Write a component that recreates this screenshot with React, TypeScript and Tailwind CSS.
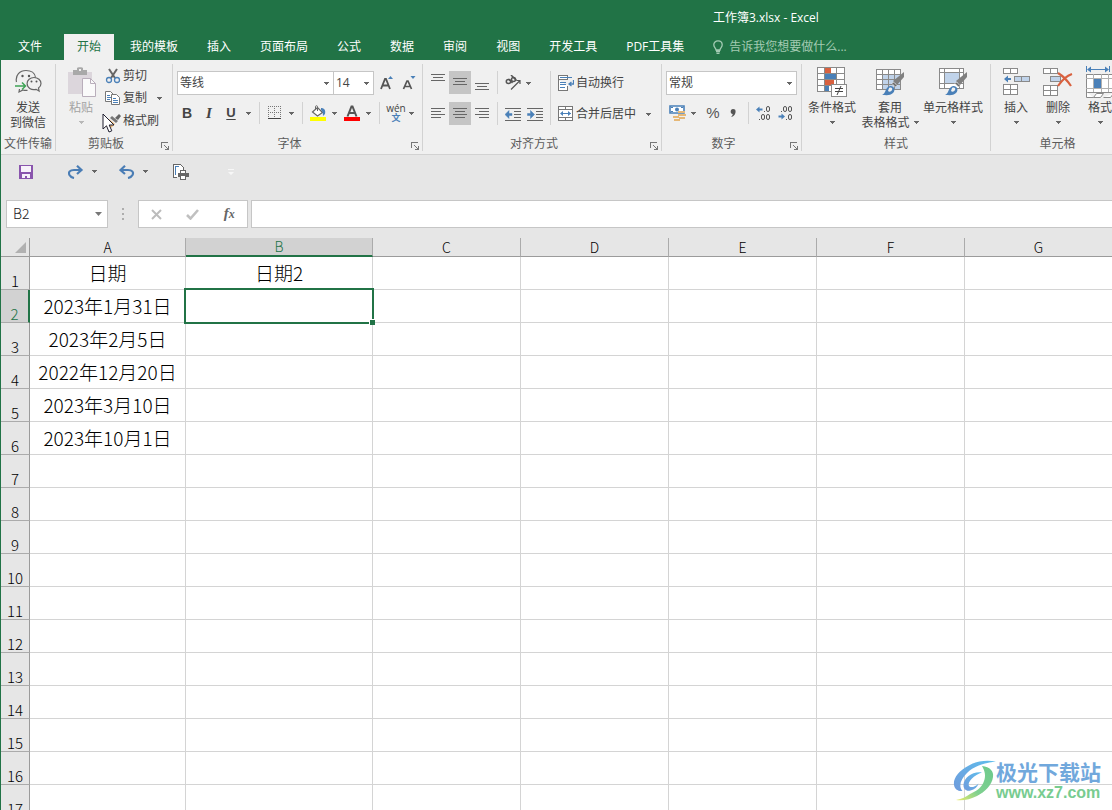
import type { ReactNode } from "react";

const tabs = [
  "我的模板",
  "插入",
  "页面布局",
  "公式",
  "数据",
  "审阅",
  "视图",
  "开发工具",
  "PDF工具集",
];

const columns = ["A", "B", "C", "D", "E", "F", "G"];

const cells: Record<string, string> = {
  A1: "日期",
  B1: "日期2",
  A2: "2023年1月31日",
  A3: "2023年2月5日",
  A4: "2022年12月20日",
  A5: "2023年3月10日",
  A6: "2023年10月1日",
};

const rows = Array.from({ length: 17 }, (_, i) => i + 1);

function Arrow({ className = "text-[#666666]" }: { className?: string }) {
  return (
    <svg viewBox="0 0 5 3" className={`h-[3px] w-[5px] shrink-0 ${className}`} fill="currentColor" shapeRendering="crispEdges" aria-hidden="true">
      <path d="M0 0h5v1h-1v1h-1v1h-1v-1h-1v-1h-1z" />
    </svg>
  );
}

function DropButton({ label, className = "" }: { label: string; className?: string }) {
  return (
    <button type="button" aria-label={label} className={`flex h-6 w-3 shrink-0 items-center justify-center ${className}`}>
      <Arrow />
    </button>
  );
}

function IconButton({ label, className = "", children }: { label: string; className?: string; children: ReactNode }) {
  return (
    <button type="button" aria-label={label} className={`flex h-6 shrink-0 items-center justify-center ${className}`}>
      {children}
    </button>
  );
}

function Separator({ className = "h-[22px]" }: { className?: string }) {
  return <div className={`w-px shrink-0 bg-[#d2d2d2] ${className}`} />;
}

function Group({
  label,
  launcher = false,
  className,
  children,
}: {
  label: string;
  launcher?: boolean;
  className: string;
  children: ReactNode;
}) {
  return (
    <section aria-label={label} className={`relative flex h-[87px] shrink-0 flex-col border-r border-[#d2d2d2] ${className}`}>
      <div className="h-[73px]">{children}</div>
      <p className={`text-center leading-[14px] text-[#5c5c5c] ${launcher ? "pr-4" : ""}`}>{label}</p>
      {launcher && (
        <button type="button" aria-label={`${label}设置`} className="absolute right-[3px] bottom-px">
          <svg viewBox="0 0 8 8" className="size-2" fill="none" stroke="#777777" shapeRendering="crispEdges">
            <path d="M.5 6V.5H7M3 3l4 4M7.500 4v3.500H4" />
            <path d="M5 7h3M7 5v3" />
          </svg>
        </button>
      )}
    </section>
  );
}

function SelectBox({ label, value, className }: { label: string; value: string; className: string }) {
  return (
    <div className={`grid h-6 shrink-0 items-center border border-[#c6c6c6] bg-white ${className}`}>
      <select aria-label={label} defaultValue={value} className="col-start-1 row-start-1 h-full w-full appearance-none pl-0.5 text-[12px] text-[#444444] outline-none">
        <option>{value}</option>
      </select>
      <span className="pointer-events-none col-start-1 row-start-1 mr-1 flex justify-self-end">
        <Arrow />
      </span>
    </div>
  );
}

function AlignButton({ label, d, active = false }: { label: string; d: string; active?: boolean }) {
  return (
    <button
      type="button"
      aria-label={label}
      aria-pressed={active}
      className={`flex h-[23px] w-[22px] items-center justify-center ${active ? "bg-[#c5c5c5]" : ""}`}
    >
      <svg viewBox="0 0 14 23" className="h-[23px] w-3.5" stroke="#666666" shapeRendering="crispEdges">
        <path d={d} />
      </svg>
    </button>
  );
}

function BigButton({
  lines,
  icon,
  className,
  inlineArrow = false,
  arrow = true,
  muted = false,
}: {
  lines: string[];
  icon: ReactNode;
  className: string;
  inlineArrow?: boolean;
  arrow?: boolean;
  muted?: boolean;
}) {
  return (
    <button
      type="button"
      className={`flex shrink-0 flex-col items-center leading-[15px] whitespace-nowrap ${muted ? "text-[#a3a3a3]" : "text-[#444444]"} ${className}`}
    >
      <span className="flex h-9 items-center">{icon}</span>
      <span>{lines[0]}</span>
      <span className="flex h-[15px] items-center gap-1">
        {lines[1]}
        {arrow && <Arrow className={muted ? "text-[#b8b8b8]" : "text-[#666666]"} />}
        {inlineArrow && <Arrow />}
      </span>
    </button>
  );
}

function Brush() {
  return (
    <>
      <path d="M29 5v5l-7 8-4-4z" fill="#808080" />
      <path d="M18.500 15l3.500 3.500-1.500 1.500-3.500-3.500z" fill="#6a6a6a" stroke="#f0f0f0" strokeWidth=".6" />
      <path d="M7 28c4-1 3-8 8-9 4-.5 6 4 3 7-3 3-7 2-11 2z" fill="#4a80b8" />
      <path d="M14 21c2-1 4 0 3 2s-3 2-4 1z" fill="#f0f0f0" />
    </>
  );
}

function WeChatIcon() {
  return (
    <svg viewBox="0 0 27 26" className="h-[26px] w-[27px]" fill="none" stroke="#666666" strokeWidth="1.200">
      <path d="M1.500 13C0 6 5 1.500 11 1.500c5 0 9 2.500 9.500 7" />
      <path d="M4.500 20l-.5 3 4-2c1.500.5 3 .6 4.500.3" />
      <path d="M19 8.500c4 0 7 2.700 7 6 0 2-1 3.500-2.500 4.600l.6 2.900-3-1.700c-5 1-9-1.500-9-5.800 0-3.300 3-6 6.900-6z" />
      <path d="M0 17h10.500M7 13.500l3.500 3.500L7 20.500" stroke="#3ea356" strokeWidth="1.500" />
      <g fill="#555555" stroke="none">
        <circle cx="7.500" cy="7" r="1.200" />
        <circle cx="14" cy="7" r="1.200" />
        <circle cx="16.500" cy="12.500" r="1" />
        <circle cx="21.500" cy="12.500" r="1" />
      </g>
    </svg>
  );
}

function PasteIcon() {
  return (
    <svg viewBox="0 0 29 30" className="h-[30px] w-[29px]">
      <path d="M1 5h24v22H1z" fill="#dcd6dc" />
      <path d="M6 3h4V1c0-1 6-1 6 0v2h4v5H6z" fill="#a9a9a9" />
      <path d="M12 2h2v2h-2z" fill="#f0f0f0" />
      <path d="M15.500 11.500h8l5 5v13h-13z" fill="#fafafa" stroke="#b9aebb" />
      <path d="M23.500 11.500v5h5" fill="none" stroke="#b9aebb" />
    </svg>
  );
}

function Ribbon() {
  return (
    <div className="flex h-[95px] overflow-hidden border-b border-[#d2d2d2] bg-[#f0f0f0] pt-1 text-[12px]">
      <Group label="文件传输" className="w-[55px]">
        <BigButton className="w-full" arrow={false} lines={["发送", "到微信"]} icon={<WeChatIcon />} />
      </Group>

      <Group label="剪贴板" launcher className="w-[117px]">
        <div className="flex">
          <BigButton className="ml-[7px] w-9" muted lines={["粘贴"]} icon={<PasteIcon />} />
          <div className="ml-1.5 flex flex-1 flex-col text-[#444444]">
            <button type="button" className="flex h-[23px] items-center gap-0.5">
              <svg viewBox="0 0 16 16" className="size-4" fill="none">
                <path d="M4 1l6 9M12 1L6 10" stroke="#666666" strokeWidth="2" />
                <circle cx="4" cy="12" r="2.500" stroke="#4a80b8" strokeWidth="1.300" />
                <circle cx="12" cy="12" r="2.500" stroke="#4a80b8" strokeWidth="1.300" />
              </svg>
              剪切
            </button>
            <div className="flex h-[22px] items-center">
              <button type="button" className="flex items-center gap-0.5">
                <svg viewBox="0 0 16 16" className="size-4" fill="#ffffff" stroke="#777777">
                  <path d="M.5 1.500h5l3 3v7h-8z" />
                  <path d="M2 5.500h3M2 7.500h4M2 9.500h3" stroke="#4a80b8" />
                  <path d="M6.500 4.500h5l3 3v7h-8z" />
                  <path d="M8 8.500h3M8 10.500h5M8 12.500h5" stroke="#4a80b8" />
                </svg>
                复制
              </button>
              <DropButton label="复制选项" className="ml-1.5" />
            </div>
            <button type="button" className="flex h-6 items-center gap-0.5">
              <svg viewBox="0 0 16 16" className="size-4">
                <path d="M14 1l2 2-3 4-3-2z" fill="#666666" />
                <path d="M7 3l6 5-2 2-6-5z" fill="#777777" />
                <path d="M4 6l6 5-4 4c-2 0-5-1-6-3z" fill="#eab676" />
              </svg>
              格式刷
            </button>
          </div>
        </div>
        {/* mouse pointer resting over the clipboard group */}
        <svg viewBox="0 0 13 20" className="pointer-events-none absolute top-[49px] left-[46px] h-5 w-[13px]" aria-hidden="true">
          <path d="M1 1v15l3.500-3.200L7 19l2.800-1.200-2.600-5.800H12z" fill="#ffffff" stroke="#1f1f2f" />
        </svg>
      </Group>

      <Group label="字体" launcher className="w-[250px]">
        <div className="flex items-center pt-[7px] pl-1">
          <SelectBox label="字体" value="等线" className="w-[157px]" />
          <SelectBox label="字号" value="14" className="-ml-px w-[41px]" />
          <IconButton label="增大字号" className="ml-1.5 w-[14px]">
            <svg viewBox="0 0 14 16" className="h-4 w-3.5">
              <path d="M1 14L5 4h1l4 10M2.500 10.500h6" fill="none" stroke="#555555" strokeWidth="1.800" />
              <path d="M8 4l2.500-3L13 4z" fill="#4a80b8" />
            </svg>
          </IconButton>
          <IconButton label="减小字号" className="ml-2 w-[14px]">
            <svg viewBox="0 0 14 16" className="h-4 w-3.5">
              <path d="M1.500 14L5 6h1l3.500 8M3 11.500h5" fill="none" stroke="#555555" strokeWidth="1.700" />
              <path d="M8.500 1h5L11 4z" fill="#4a80b8" />
            </svg>
          </IconButton>
        </div>
        <div className="flex items-center pt-[6px] pl-1 text-[#444444]">
          <IconButton label="加粗" className="w-5 font-['Liberation_Sans',sans-serif] text-[14px] font-bold">B</IconButton>
          <IconButton label="倾斜" className="ml-0.5 w-5 font-['Liberation_Serif',serif] text-[15px] font-bold italic">I</IconButton>
          <IconButton label="下划线" className="ml-0.5 w-5 font-['Liberation_Sans',sans-serif] text-[13px] font-bold underline underline-offset-2">U</IconButton>
          <DropButton label="下划线选项" className="ml-px" />
          <Separator className="ml-[5px] h-[22px]" />
          <IconButton label="边框" className="ml-1.5 w-[18px]">
            <svg viewBox="0 0 14 14" className="size-3.5" fill="none" stroke="#777777" shapeRendering="crispEdges">
              <path d="M0 .5h14M0 6.500h14M.5 0v13M6.500 0v13M12.500 0v13" strokeDasharray="1 1" />
              <path d="M0 12.500h13" stroke="#444444" />
            </svg>
          </IconButton>
          <DropButton label="边框选项" className="ml-px" />
          <Separator className="ml-[5px] h-[22px]" />
          <IconButton label="填充颜色" className="ml-1.5 w-[18px]">
            <svg viewBox="0 0 16 16" className="size-4">
              <path d="M2.500 7l5-4.500 5 5-5 3.500z" fill="#ffffff" stroke="#666666" strokeWidth="1.200" />
              <path d="M5.500 5V1.500c0-1 2-1 2 0V6" fill="none" stroke="#666666" />
              <path d="M11 3c3 0 5 2 4 6l-2 2c0-3-.5-5-2-6z" fill="#4a80b8" />
              <path d="M0 12h16v4H0z" fill="#ffff00" />
            </svg>
          </IconButton>
          <DropButton label="填充颜色选项" className="ml-px" />
          <IconButton label="字体颜色" className="ml-1 w-4">
            <svg viewBox="0 0 16 16" className="size-4">
              <path d="M3.500 11.500L7.500 1.500h1l4 10M5 8h6" fill="none" stroke="#555555" strokeWidth="2" />
              <path d="M0 12h16v4H0z" fill="#ff0000" />
            </svg>
          </IconButton>
          <DropButton label="字体颜色选项" className="ml-0.5" />
          <Separator className="ml-[5px] h-[22px]" />
          <IconButton label="拼音指南" className="ml-2 w-4 flex-col text-[10px] leading-[9px]">
            <span>wén</span>
            <span className="text-[9px] font-bold text-[#4a80b8]">文</span>
          </IconButton>
          <DropButton label="拼音选项" className="ml-px" />
        </div>
      </Group>

      <Group label="对齐方式" launcher className="w-[239px]">
        <div className="flex pt-[7px] pl-1">
          <div className="flex flex-col gap-2">
            <div className="flex">
              <AlignButton label="顶端对齐" d="M0 3.500h14M2 6.500h10M0 9.500h14" />
              <AlignButton label="垂直居中" active d="M0 7.500h14M2 10.500h10M0 13.500h14" />
              <AlignButton label="底端对齐" d="M0 12.500h14M2 15.500h10M0 18.500h14" />
            </div>
            <div className="flex">
              <AlignButton label="左对齐" d="M0 6.500h14M0 9.500h10M0 12.500h14M0 15.500h10" />
              <AlignButton label="居中" active d="M0 6.500h14M2 9.500h10M0 12.500h14M2 15.500h10" />
              <AlignButton label="右对齐" d="M0 6.500h14M4 9.500h10M0 12.500h14M4 15.500h10" />
            </div>
          </div>
          <div className="ml-1 flex flex-col gap-2">
            <Separator className="h-[23px]" />
            <Separator className="h-[23px]" />
          </div>
          <div className="ml-1.5 flex w-[46px] flex-col gap-[7px]">
            <div className="flex items-center">
              <IconButton label="方向" className="w-[18px]">
                <svg viewBox="0 0 16 16" className="size-4" fill="none" stroke="#555555" strokeWidth="1.500">
                  <ellipse cx="3.500" cy="6.500" rx="2.200" ry="2" />
                  <path d="M3.500 4l4 4M6 0l5.500 5.500" />
                  <circle cx="8.500" cy="4.500" r="2" />
                  <path d="M6 14.500L15 5.500M11.500 5.500H15V9" strokeWidth="1.200" />
                </svg>
              </IconButton>
              <DropButton label="方向选项" />
            </div>
            <div className="flex items-center gap-1">
              <IconButton label="减少缩进量" className="w-[18px]">
                <svg viewBox="0 0 16 13" className="h-[13px] w-4" stroke="#666666" shapeRendering="crispEdges">
                  <path d="M0 .5h16M9 3.500h7M9 6.500h7M9 9.500h7M0 12.500h16" />
                  <path d="M0 6.500l4-4v3h3v2H4v3z" fill="#4a80b8" stroke="#4a80b8" strokeWidth=".5" shapeRendering="auto" />
                </svg>
              </IconButton>
              <IconButton label="增加缩进量" className="w-[18px]">
                <svg viewBox="0 0 16 13" className="h-[13px] w-4" stroke="#666666" shapeRendering="crispEdges">
                  <path d="M0 .5h16M9 3.500h7M9 6.500h7M9 9.500h7M0 12.500h16" />
                  <path d="M7.500 6.500l-4-4v3h-3v2h3v3z" fill="#4a80b8" stroke="#4a80b8" strokeWidth=".5" shapeRendering="auto" />
                </svg>
              </IconButton>
            </div>
          </div>
          <Separator className="h-[54px]" />
          <div className="ml-[7px] flex flex-col gap-[7px] text-[#444444]">
            <button type="button" className="flex h-6 items-center gap-0.5">
              <svg viewBox="0 0 16 16" className="size-4" fill="none" stroke="#777777" shapeRendering="crispEdges">
                <path d="M.5 .5h9v4h-9zM.5 5v10h9V11" fill="#ffffff" />
                <path d="M2 2.500h12M2 7.500h6M2 9.500h6M2 12.500h5" stroke="#4a80b8" />
                <path d="M15.500 5v4h-4M13.500 7l-2.500 2 2.500 2" stroke="#4a80b8" strokeWidth="1.300" shapeRendering="auto" />
              </svg>
              自动换行
            </button>
            <div className="flex items-center">
              <button type="button" className="flex h-6 items-center gap-0.5">
                <svg viewBox="0 0 16 16" className="size-4" fill="#ffffff" stroke="#777777" shapeRendering="crispEdges">
                  <path d="M.5 .5h14v14H.5zM.5 3.500h14M.5 11.500h14M7.500 .5v3M7.500 11.500v3" />
                  <path d="M3 7.500h10" stroke="#4a80b8" />
                  <path d="M2 7.500L5 5v5zM13 7.500L10 5v5z" fill="#4a80b8" stroke="none" shapeRendering="auto" />
                </svg>
                合并后居中
              </button>
              <DropButton label="合并选项" className="ml-1.5" />
            </div>
          </div>
        </div>
      </Group>

      <Group label="数字" launcher className="w-[140px]">
        <div className="pt-[7px] pl-1">
          <SelectBox label="数字格式" value="常规" className="w-[131px]" />
        </div>
        <div className="flex items-center pt-[6px] pl-1.5 text-[#555555]">
          <IconButton label="会计数字格式" className="w-[18px]">
            <svg viewBox="0 0 17 16" className="h-4 w-[17px]">
              <path d="M1 1h14v7H1z" fill="#ffffff" stroke="#4a80b8" strokeWidth="1.600" />
              <circle cx="8" cy="4.500" r="2" fill="#4a80b8" />
              <path d="M2 2h2v1H2zM12 2h2v1h-2zM2 6h2v1H2z" fill="#4a80b8" />
              <path d="M9 6h7v2H9zM9 9h8v2H9zM4 11h6v2H4zM5 14h6v2H5zM10 12h6v2h-6z" fill="#e6b877" />
            </svg>
          </IconButton>
          <DropButton label="会计格式选项" className="ml-px" />
          <IconButton label="百分比样式" className="ml-1 w-5 font-['Liberation_Sans',sans-serif] text-[15px]">%</IconButton>
          <IconButton label="千位分隔样式" className="w-5">
            <svg viewBox="0 0 6 8" className="h-2 w-1.5">
              <path d="M3 0c2 0 3 1 2.500 3.500C5 6 3.500 7.500 1 8c1-1 1.700-2 1.700-3C0 5 0 0 3 0z" fill="#555555" />
            </svg>
          </IconButton>
          <Separator className="ml-[5px] h-[22px]" />
          <IconButton label="增加小数位数" className="ml-[7px] w-4">
            <svg viewBox="0 0 16 16" className="size-4" fill="none" stroke="#555555">
              <path d="M0 4.500l3.500-3v2h3v2h-3v2z" fill="#4a80b8" stroke="none" />
              <path d="M8 6.500h1M3 14.500h1" />
              <rect x="10.500" y="1.500" width="3" height="5" rx="1.500" />
              <rect x="5.500" y="9.500" width="3" height="5" rx="1.500" />
              <rect x="10.500" y="9.500" width="3" height="5" rx="1.500" />
            </svg>
          </IconButton>
          <IconButton label="减少小数位数" className="ml-1.5 w-4">
            <svg viewBox="0 0 16 16" className="size-4" fill="none" stroke="#555555">
              <path d="M7 11.500l-3.500-3v2h-3v2h3v2z" fill="#4a80b8" stroke="none" />
              <path d="M3 6.500h1M8 14.500h1" />
              <rect x="5.500" y="1.500" width="3" height="5" rx="1.500" />
              <rect x="10.500" y="1.500" width="3" height="5" rx="1.500" />
              <rect x="10.500" y="9.500" width="3" height="5" rx="1.500" />
            </svg>
          </IconButton>
        </div>
      </Group>

      <Group label="样式" className="w-[189px]">
        <div className="flex gap-[3px] pl-1">
          <BigButton
            className="w-[52px]"
            lines={["条件格式"]}
            icon={
              <svg viewBox="0 0 30 30" className="size-[30px]" shapeRendering="crispEdges">
                <path d="M.5 .5h27v24H.5z" fill="#ffffff" />
                <path d="M8 1h6v5H8zM8 13h9v5H8z" fill="#d9613f" />
                <path d="M8 7h11v5H8zM8 19h4v5H8z" fill="#4a80b8" />
                <path d="M.5 .5h27v24H.5zM7.500 0v24M19.500 0v24M0 6.500h27M0 12.500h27M0 18.500h27" fill="none" stroke="#8a8a8a" />
                <path d="M14.500 17.500h15v12h-15z" fill="#ffffff" stroke="#8a8a8a" />
                <path d="M18 21.500h8M18 24.500h8" stroke="#444444" />
                <path d="M24 19l-4 9" stroke="#444444" shapeRendering="auto" />
              </svg>
            }
          />
          <BigButton
            className="w-[58px]"
            inlineArrow
            arrow={false}
            lines={["套用", "表格格式"]}
            icon={
              <svg viewBox="0 0 30 30" className="size-[30px]">
                <path d="M1.500 2.500h24v20h-24z" fill="#ffffff" />
                <path d="M8 8h17v14H8z" fill="#c0d3ea" />
                <path d="M1.500 2.500h24v20h-24zM7.500 2v20M13.500 2v20M19.500 2v20M1 7.500h24M1 12.500h24M1 17.500h24" fill="none" stroke="#8a8a8a" shapeRendering="crispEdges" />
                <Brush />
              </svg>
            }
          />
          <BigButton
            className="w-[62px]"
            lines={["单元格样式"]}
            icon={
              <svg viewBox="0 0 30 30" className="size-[30px]">
                <path d="M1.500 1.500h24v20h-24z" fill="#ffffff" />
                <path d="M7 6h14v11H7z" fill="#c0d3ea" />
                <path d="M1.500 1.500h24v20h-24zM6.500 1v20M21.500 1v20M1 5.500h24M1 16.500h24" fill="none" stroke="#8a8a8a" shapeRendering="crispEdges" />
                <Brush />
              </svg>
            }
          />
        </div>
      </Group>

      <Group label="单元格" className="w-[134px]">
        <div className="flex pl-1">
          <BigButton
            className="w-[42px]"
            lines={["插入"]}
            icon={
              <svg viewBox="0 0 27 28" className="h-7 w-[27px]" shapeRendering="crispEdges">
                <path d="M.5 .5h14v5H.5zM.5 16.500h14v10H.5z" fill="#ffffff" stroke="#8a8a8a" />
                <path d="M7.500 0v5M7.500 17v10M0 21.500h14" stroke="#8a8a8a" />
                <path d="M11.500 8.500h15v5h-15zM18.500 8.500v5" fill="#c0d3ea" stroke="#8a8a8a" />
                <path d="M1 11l4-3.500v2.500h3v2H5v2.500z" fill="#4a80b8" shapeRendering="auto" />
              </svg>
            }
          />
          <BigButton
            className="w-[42px]"
            lines={["删除"]}
            icon={
              <svg viewBox="0 0 30 28" className="h-7 w-[30px]" shapeRendering="crispEdges">
                <path d="M.5 .5h14v5H.5zM.5 17.500h14v10H.5z" fill="#ffffff" stroke="#8a8a8a" />
                <path d="M7.500 0v5M7.500 18v10M0 22.500h14" stroke="#8a8a8a" />
                <path d="M7.500 8.500h10v5h-10z" fill="#c0d3ea" stroke="#8a8a8a" />
                <path d="M15 5c5 3 9 7 13 13M29 6c-6 2-10 6-14 12" fill="none" stroke="#d9613f" strokeWidth="2.200" shapeRendering="auto" />
              </svg>
            }
          />
          <BigButton
            className="w-[42px]"
            lines={["格式"]}
            icon={
              <svg viewBox="0 0 28 32" className="h-8 w-7" shapeRendering="crispEdges">
                <path d="M.5 0v6M23.500 0v6M2 3.500h20" stroke="#4a80b8" />
                <path d="M1 3.500L5 .5v6zM23 3.500L19 .5v6z" fill="#4a80b8" shapeRendering="auto" />
                <path d="M.5 8.500h27v18H.5z" fill="#ffffff" stroke="#8a8a8a" />
                <path d="M7.500 8v18M15.500 8v18M22.500 8v18M0 12.500h27M0 22.500h27" stroke="#b0b0b0" />
                <path d="M8 13h7v9H8z" fill="#4a80b8" />
                <path d="M.5 26v5.500h7l3-4h7l-3 4h-7M17.500 31.500h7l3-4" fill="#ffffff" stroke="#8a8a8a" shapeRendering="auto" />
              </svg>
            }
          />
        </div>
      </Group>
    </div>
  );
}

function QuickAccess() {
  return (
    <div className="flex h-[35px] items-center pb-0.5 pl-[18px]">
      <IconButton label="保存" className="w-3.5">
        <svg viewBox="0 0 14 14" className="size-3.5" shapeRendering="crispEdges">
          <path d="M0 0h14v14H0z" fill="#8955ad" />
          <path d="M2 1h10v6H2zM3 9h8v4H3z" fill="#f7f2fa" />
          <path d="M6 11h2v2H6z" fill="#8955ad" />
        </svg>
      </IconButton>
      <IconButton label="恢复" className="ml-[35px] w-4">
        <svg viewBox="0 0 16 14" className="h-3.5 w-4" fill="none" stroke="#4a7db5" strokeWidth="2.200">
          <path d="M13 5H6C2 5 0 7 1.500 10c.8 1.500 2 2.500 4.500 3" />
          <path d="M9 .8L13.500 5 9 9" />
        </svg>
      </IconButton>
      <DropButton label="恢复选项" className="ml-1" />
      <IconButton label="撤消" className="ml-[19px] w-4">
        <svg viewBox="0 0 16 14" className="h-3.5 w-4" fill="none" stroke="#4a7db5" strokeWidth="2.200">
          <path d="M3 5h6c4 0 6 2 4.500 5-.8 1.500-2 2.500-4.500 3" />
          <path d="M6 .8L1.500 5 6 9" />
        </svg>
      </IconButton>
      <DropButton label="撤消选项" className="ml-1" />
      <IconButton label="打印预览" className="ml-[22px] w-4">
        <svg viewBox="0 0 16 16" className="size-4" fill="none" stroke="#666666" shapeRendering="crispEdges">
          <path d="M4 13.500H.5V.5h7l3 3V6" fill="#ffffff" />
          <path d="M2.500 11V2.500h3" stroke="#4a80b8" />
          <path d="M7.500 9V6.500h5V9" fill="#ffffff" />
          <path d="M5 9h11v4H5z" fill="#666666" stroke="none" />
          <path d="M7.500 11.500h5v4h-5z" fill="#ffffff" />
        </svg>
      </IconButton>
      <IconButton label="自定义快速访问工具栏" className="ml-9 w-3">
        <svg viewBox="0 0 6 6" className="size-1.5" fill="#f7f7f7">
          <path d="M0 0h6v1H0zM0 3h6L3 6z" />
        </svg>
      </IconButton>
    </div>
  );
}

function FormulaBar() {
  return (
    <div className="flex h-12 items-center pl-[5px]">
      <div className="flex h-7 w-[102px] shrink-0 items-center border border-[#c6c6c6] bg-white">
        <input
          aria-label="名称框"
          defaultValue="B2"
          className="h-full w-0 flex-1 pb-0.5 pl-1.5 font-['Noto_Sans_CJK_SC',sans-serif] text-[14px] font-light text-[#222222] outline-none"
        />
        <button type="button" aria-label="名称列表" className="flex h-full w-[18px] items-center justify-center">
          <svg viewBox="0 0 7 4" className="h-1 w-[7px]" fill="#777777">
            <path d="M0 0h7L3.500 4z" />
          </svg>
        </button>
      </div>
      <svg viewBox="0 0 2 12" className="mx-3.5 h-3 w-0.5 shrink-0" fill="#adadad">
        <path d="M0 0h2v2H0zM0 5h2v2H0zM0 10h2v2H0z" />
      </svg>
      <div className="flex h-7 w-[110px] shrink-0 items-center justify-around border border-[#c6c6c6] bg-white">
        <button type="button" aria-label="取消">
          <svg viewBox="0 0 11 11" className="size-[11px]" stroke="#bcbcbc" strokeWidth="2">
            <path d="M1 1l9 9M10 1l-9 9" />
          </svg>
        </button>
        <button type="button" aria-label="输入">
          <svg viewBox="0 0 13 11" className="h-[11px] w-[13px]" fill="none" stroke="#c0c0c0" strokeWidth="2.600">
            <path d="M1 6l3.500 3.500L12 1" />
          </svg>
        </button>
        <button type="button" aria-label="插入函数" className="pb-0.5 font-['Liberation_Serif',serif] text-[15px] leading-5 font-bold text-[#666666] italic">
          f<span className="text-[12px]">x</span>
        </button>
      </div>
      <input aria-label="编辑栏" className="ml-[3px] h-7 min-w-0 flex-1 border border-r-0 border-[#c6c6c6] bg-white px-2 text-[14px] outline-none" />
    </div>
  );
}

function Sheet() {
  return (
    <table className="w-full table-fixed border-separate border-spacing-0 font-['Noto_Sans_CJK_SC',sans-serif] font-light">
      <colgroup>
        <col className="w-[29px]" />
        <col className="w-[156px]" />
        <col className="w-[187px]" />
        {columns.slice(2).map((c) => (
          <col key={c} className="w-[148px]" />
        ))}
        <col />
      </colgroup>
      <thead>
        <tr className="h-[19px] text-[14px] leading-[17px]">
          <th className="border-r border-b border-[#9b9b9b] bg-[#e6e6e6] p-0">
            <svg viewBox="0 0 11 11" className="mr-[3px] ml-auto size-[11px]" fill="#b1b1b1">
              <path d="M11 0v11H0z" />
            </svg>
          </th>
          {columns.map((c) => (
            <th
              key={c}
              scope="col"
              className={
                c === "B"
                  ? "border-r border-b-2 border-r-[#ababab] border-b-[#217346] bg-[#d2d2d2] p-0 align-bottom font-light text-[#217346]"
                  : "border-r border-b border-r-[#ababab] border-b-[#9b9b9b] bg-[#e6e6e6] p-0 align-bottom font-light text-black"
              }
            >
              {c}
            </th>
          ))}
          <td className="border-b border-[#9b9b9b] bg-[#e6e6e6] p-0" />
        </tr>
      </thead>
      <tbody>
        {rows.map((r) => (
          <tr key={r} className="h-[33px]">
            <th
              scope="row"
              className={
                r === 2
                  ? "border-r-2 border-b border-r-[#217346] border-b-[#ababab] bg-[#d2d2d2] p-0 align-bottom text-[15px] leading-4 font-light text-[#217346]"
                  : "border-r border-b border-r-[#9b9b9b] border-b-[#ababab] bg-[#e6e6e6] p-0 align-bottom text-[15px] leading-4 font-light text-black"
              }
            >
              {r}
            </th>
            {columns.map((c) => (
              <td key={c} className="relative border-r border-b border-[#d4d4d4] p-0 text-center text-[19px] leading-7 whitespace-nowrap text-black">
                {cells[c + r]}
                {c === "B" && r === 2 && (
                  <>
                    <div className="absolute -top-0.5 -right-0.5 -bottom-0.5 -left-0.5 z-10 border-2 border-[#217346]" />
                    <div className="absolute -right-[3px] -bottom-[3px] z-10 size-[6px] border-t border-l border-white bg-[#217346]" />
                  </>
                )}
              </td>
            ))}
            <td className="border-b border-[#d4d4d4] p-0" />
          </tr>
        ))}
      </tbody>
    </table>
  );
}

function Watermark() {
  return (
    <div className="absolute right-[11px] bottom-[7px] z-20 flex items-center">
      <svg viewBox="0 0 44 42" className="h-[42px] w-11" fill="none">
        <defs>
          <linearGradient id="wm-blue" x1="1" y1="0" x2="0" y2="1">
            <stop offset="0" stopColor="#5fbdec" />
            <stop offset="1" stopColor="#6f9bdc" />
          </linearGradient>
          <linearGradient id="wm-green" x1="1" y1="0" x2="0" y2="1">
            <stop offset="0" stopColor="#6cc98c" />
            <stop offset=".6" stopColor="#7fd08f" />
            <stop offset="1" stopColor="#ecec6a" />
          </linearGradient>
        </defs>
        <path d="M44 1.500C34 0 24 1 16 6 7 11 1 18 2 25c.5 4 4 6.500 8.500 6C6 26 9 19 15 13 22 6 32 3 44 1.500z" fill="url(#wm-blue)" />
        <path d="M30 6c8 1 12 5 11 11-1 8-8 15-16 19-7 3.500-14 5-21 4 6-1 10-3 14-6 7-3 12-7 14-13 2-5 1-10-2-15z" fill="url(#wm-green)" />
        <path d="M30 12.500c-9-1.500-18 5-18.500 12-.3 5 3 7 7 6 4-1 7-3.500 8-7-3 3-6 4-8 3.500-3-1-2-5 1-8 3-3 7-5.500 10.500-6.500z" fill="url(#wm-blue)" />
      </svg>
      <div className="font-['Noto_Sans_CJK_SC',sans-serif] font-bold whitespace-nowrap">
        <p className="text-[21px] leading-6 text-[#71a8dc]">极光下载站</p>
        <p className="font-['Liberation_Sans',sans-serif] text-[16px] leading-5 text-[#78cc90]">www.xz7.com</p>
      </div>
    </div>
  );
}

export default function App() {
  return (
    <div className="relative flex h-screen flex-col overflow-hidden border-l border-[#217346] bg-[#e6e6e6] font-['Open_Sans','Noto_Sans_CJK_SC',sans-serif] text-[12px]">
      <header className="bg-[#217346] text-white">
        <h1 className="h-[34px] pl-[712px] leading-9 whitespace-nowrap">工作簿3.xlsx - Excel</h1>
        <nav aria-label="功能区" className="flex h-[26px] items-stretch gap-[3px] pl-1 whitespace-nowrap">
          <button type="button" className="mr-1.5 px-[13px]">文件</button>
          <button type="button" aria-current="page" className="bg-[#f0f0f0] px-[13px] text-[#217346]">
            开始
          </button>
          {tabs.map((tab) => (
            <button key={tab} type="button" className="px-[13px]">
              {tab}
            </button>
          ))}
          <button type="button" className="ml-[13px] flex items-center gap-1.5 text-[#a3cbb3]">
            <svg viewBox="0 0 10 14" className="h-3.5 w-2.5" fill="none" stroke="currentColor" strokeWidth="1.300">
              <path d="M3 10C3 8 .8 7.500 .8 4.800.8 2.500 2.600.8 5 .8s4.200 1.700 4.200 4C9.200 7.500 7 8 7 10zM3 11.500h4M3.500 13.300h3" />
            </svg>
            告诉我您想要做什么...
          </button>
        </nav>
      </header>
      <Ribbon />
      <QuickAccess />
      <FormulaBar />
      <main className="min-h-0 flex-1 overflow-hidden bg-white">
        <Sheet />
      </main>
      <Watermark />
    </div>
  );
}
